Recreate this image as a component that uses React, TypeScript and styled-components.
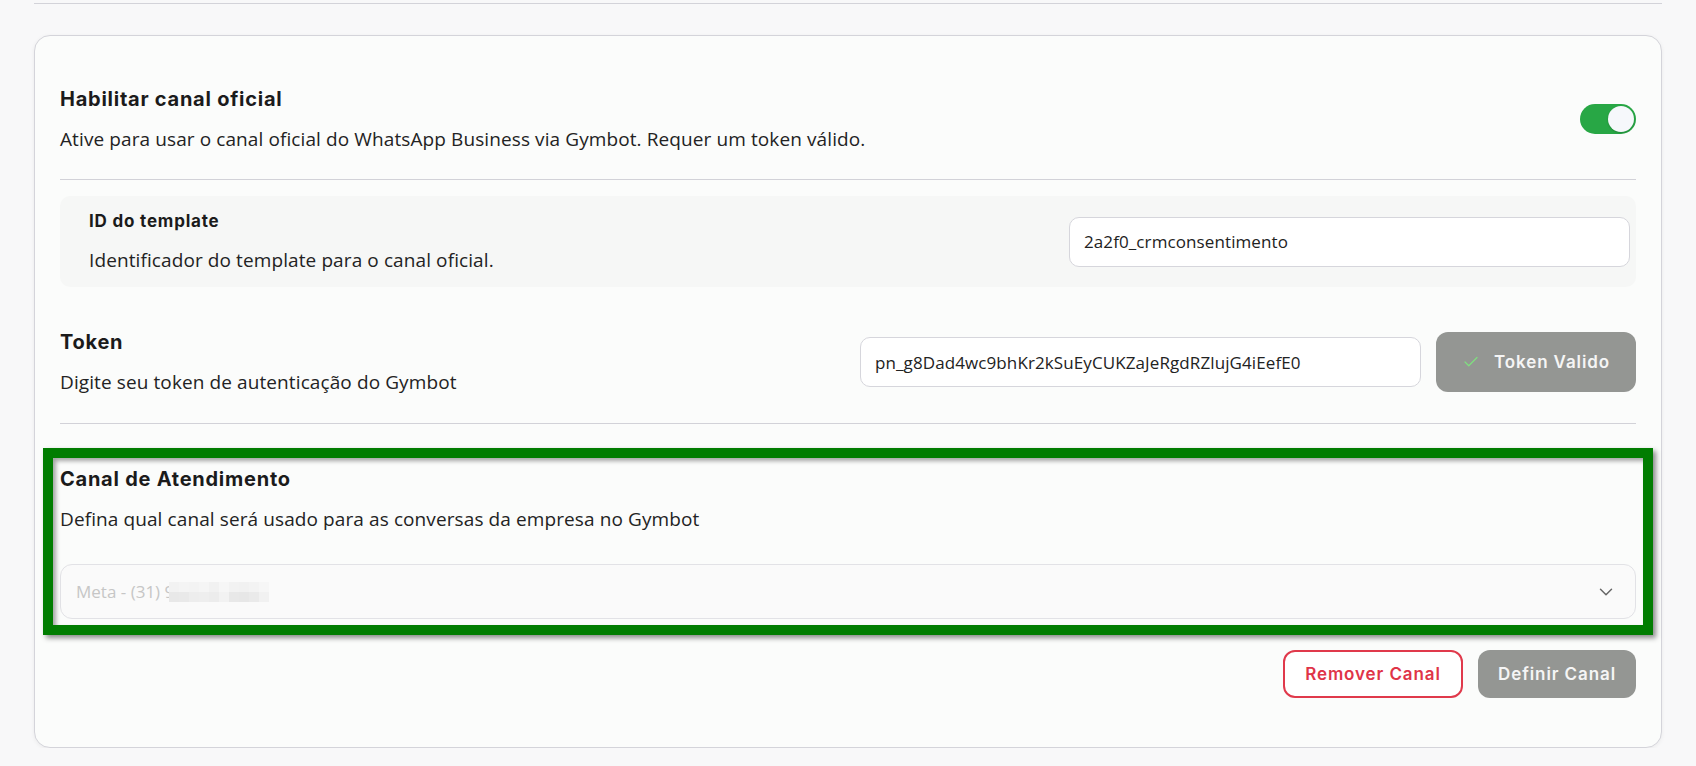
import React from 'react';
import styled, { createGlobalStyle } from 'styled-components';
import { Check, ChevronDown } from 'lucide-react';

const GlobalStyle = createGlobalStyle`
  body {
    margin: 0;
    background: #f8f8f9;
    font-family: 'Open Sans', 'Noto Sans', sans-serif;
    color: #1f1f1f;
  }
  * {
    box-sizing: border-box;
  }
`;

const Page = styled.div`
  padding: 3px 34px 0 34px;
`;

const TopRule = styled.div`
  height: 1px;
  background: #d3d3d9;
`;

const Card = styled.section`
  margin-top: 31px;
  background: #fbfcfb;
  border: 1px solid #d4d4da;
  border-radius: 16px;
  box-shadow: 0 1px 4px rgba(0, 0, 0, 0.06);
  padding: 0 25px 49px;
`;

const Divider = styled.div`
  height: 1px;
  background: #d2d2d8;
`;

const Row = styled.div<{ $top?: number; $bottom?: number }>`
  display: flex;
  align-items: center;
  justify-content: space-between;
  padding-top: ${(p) => p.$top ?? 0}px;
  padding-bottom: ${(p) => p.$bottom ?? 0}px;
`;

const TextBlock = styled.div`
  display: flex;
  flex-direction: column;
`;

const Title = styled.h2`
  margin: 0;
  font-family: 'Inter', 'Open Sans', sans-serif;
  font-weight: 700;
  font-size: 20px;
  line-height: 28px;
  letter-spacing: 0.75px;
  color: #1b1b1b;
`;

const SubTitle = styled.h3`
  margin: 0;
  font-family: 'Inter', 'Open Sans', sans-serif;
  font-weight: 700;
  font-size: 17px;
  line-height: 24px;
  letter-spacing: 0.8px;
  color: #1b1b1b;
`;

const Desc = styled.p<{ $gap?: number }>`
  margin: ${(p) => p.$gap ?? 12}px 0 0;
  font-size: 19px;
  line-height: 28px;
  letter-spacing: 0.1px;
  color: #232323;
`;

const Toggle = styled.button<{ $on: boolean }>`
  width: 56px;
  height: 30px;
  border: none;
  border-radius: 15px;
  padding: 2px;
  display: flex;
  justify-content: ${(p) => (p.$on ? 'flex-end' : 'flex-start')};
  align-items: center;
  background: ${(p) => (p.$on ? '#28a745' : '#c9c9cf')};
  cursor: pointer;
`;

const Knob = styled.span`
  width: 26px;
  height: 26px;
  border-radius: 50%;
  background: #f6f8fb;
  box-shadow: 0 1px 2px rgba(0, 0, 0, 0.2);
`;

const TemplateBox = styled.div`
  margin-top: 16px;
  background: #f6f7f6;
  border-radius: 10px;
  padding: 13px 6px 13px 29px;
  display: flex;
  align-items: center;
  justify-content: space-between;
`;

const Input = styled.input`
  width: 561px;
  height: 50px;
  border: 1px solid #d6d6dc;
  border-radius: 10px;
  background: #ffffff;
  padding: 0 14px;
  font-family: 'Open Sans', 'Noto Sans', sans-serif;
  font-size: 17px;
  letter-spacing: 0.1px;
  color: #222;
  outline: none;
`;

const Controls = styled.div`
  display: flex;
  align-items: center;
  gap: 15px;
`;

const Button = styled.button<{ $variant: 'muted' | 'danger'; $w: number; $h: number }>`
  width: ${(p) => p.$w}px;
  height: ${(p) => p.$h}px;
  border-radius: 12px;
  display: flex;
  align-items: center;
  justify-content: center;
  gap: 14px;
  font-family: 'Inter', 'Open Sans', sans-serif;
  font-weight: 600;
  font-size: 17px;
  letter-spacing: 0.9px;
  cursor: pointer;
  border: ${(p) => (p.$variant === 'danger' ? '2px solid #e0394b' : 'none')};
  background: ${(p) => (p.$variant === 'danger' ? '#ffffff' : '#949693')};
  color: ${(p) => (p.$variant === 'danger' ? '#df3448' : '#f5f5f5')};
`;

const Highlighted = styled.div`
  position: relative;
  margin-top: 41px;

  &::after {
    content: '';
    position: absolute;
    top: -17px;
    left: -17.5px;
    right: -16.5px;
    bottom: -16px;
    border: 10px solid #017d01;
    box-shadow: 3px 3px 5px rgba(0, 0, 0, 0.45), inset 3px 3px 4px rgba(0, 0, 0, 0.35);
    pointer-events: none;
  }
`;

const Select = styled.div`
  margin-top: 31px;
  height: 55px;
  border: 1px solid #e2e2e6;
  border-radius: 12px;
  background: #fafafa;
  display: flex;
  align-items: center;
  justify-content: space-between;
  padding: 0 18px 0 15px;
  font-size: 17px;
  color: #c6c6c6;
`;

const SelectValue = styled.span`
  display: flex;
  align-items: center;
`;

const Redaction = styled.span`
  display: grid;
  grid-template-columns: repeat(10, 10px);
  grid-template-rows: 10px 10px;
  margin-left: -5px;
`;

const Cell = styled.span<{ $c: string }>`
  background: ${(p) => p.$c};
`;

const Actions = styled.div`
  margin-top: 31px;
  display: flex;
  justify-content: flex-end;
  gap: 15px;
`;

const redactionColors = [
  '#f2f2f2', '#f4f4f4', '#f3f3f3', '#f5f5f5', '#f1f1f1', '#f6f6f6', '#f2f2f2', '#f1f1f1', '#f3f3f3', '#f6f6f6',
  '#e8e8e8', '#e9e9e9', '#ededed', '#eeeeee', '#ececec', '#f2f2f2', '#e8e8e8', '#e7e7e7', '#eaeaea', '#f1f1f1',
];

export default function App() {
  return (
    <>
      <GlobalStyle />
      <Page>
        <TopRule />
        <Card>
          <Row $top={49} $bottom={26}>
            <TextBlock>
              <Title>Habilitar canal oficial</Title>
              <Desc>Ative para usar o canal oficial do WhatsApp Business via Gymbot. Requer um token válido.</Desc>
            </TextBlock>
            <Toggle $on aria-label="Habilitar canal oficial">
              <Knob />
            </Toggle>
          </Row>
          <Divider />

          <TemplateBox>
            <TextBlock>
              <SubTitle>ID do template</SubTitle>
              <Desc $gap={13}>Identificador do template para o canal oficial.</Desc>
            </TextBlock>
            <Input defaultValue="2a2f0_crmconsentimento" />
          </TemplateBox>

          <Row $top={41} $bottom={27}>
            <TextBlock>
              <Title>Token</Title>
              <Desc>Digite seu token de autenticação do Gymbot</Desc>
            </TextBlock>
            <Controls>
              <Input defaultValue="pn_g8Dad4wc9bhKr2kSuEyCUKZaJeRgdRZlujG4iEefE0" />
              <Button $variant="muted" $w={200} $h={60}>
                <Check size={18} strokeWidth={1.6} color="#7fe07f" />
                Token Valido
              </Button>
            </Controls>
          </Row>
          <Divider />

          <Highlighted>
            <Title>Canal de Atendimento</Title>
            <Desc>Defina qual canal será usado para as conversas da empresa no Gymbot</Desc>
            <Select>
              <SelectValue>
                Meta - (31) 9
                <Redaction>
                  {redactionColors.map((c, i) => (
                    <Cell key={i} $c={c} />
                  ))}
                </Redaction>
              </SelectValue>
              <ChevronDown size={22} strokeWidth={1.6} color="#666" />
            </Select>
          </Highlighted>

          <Actions>
            <Button $variant="danger" $w={180} $h={48}>
              Remover Canal
            </Button>
            <Button $variant="muted" $w={158} $h={48}>
              Definir Canal
            </Button>
          </Actions>
        </Card>
      </Page>
    </>
  );
}
